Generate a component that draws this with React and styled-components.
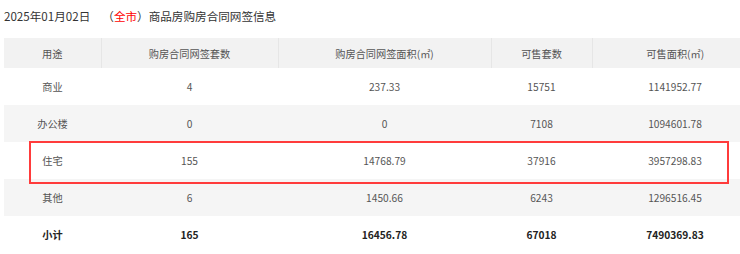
import React from 'react';
import styled, { createGlobalStyle } from 'styled-components';

// #region data
const COLUMNS = [
  { title: '用途', width: 97 },
  { title: '购房合同网签套数', width: 177 },
  { title: '购房合同网签面积(㎡)', width: 213 },
  { title: '可售套数', width: 101 },
  { title: '可售面积(㎡)', width: 166 },
];

const ROWS = [
  ['商业', '4', '237.33', '15751', '1141952.77'],
  ['办公楼', '0', '0', '7108', '1094601.78'],
  ['住宅', '155', '14768.79', '37916', '3957298.83'],
  ['其他', '6', '1450.66', '6243', '1296516.45'],
];

const TOTAL = ['小计', '165', '16456.78', '67018', '7490369.83'];
// #endregion

// #region styled components
const GlobalStyle = createGlobalStyle`
  html, body {
    margin: 0;
    padding: 0;
    overflow: hidden;
    background: #fff;
  }
  body {
    font-family: "Noto Sans CJK SC", "Noto Sans", sans-serif;
  }
`;

const Page = styled.div`
  width: 740px;
  height: 254px;
  padding: 0 0 0 4px;
  box-sizing: border-box;
  overflow: hidden;
`;

const Title = styled.div`
  display: flex;
  align-items: center;
  height: 20px;
  padding-top: 6px;
  margin-bottom: 12px;
  font-size: 11.6px;
  color: #333;
  white-space: nowrap;
`;

const Region = styled.span`
  margin-left: 12px;
`;

const Red = styled.span`
  color: #f00;
`;

const TableWrap = styled.div`
  position: relative;
  width: 754px;
`;

const Table = styled.table`
  width: 754px;
  table-layout: fixed;
  border-collapse: collapse;
  font-size: 10.2px;
  color: #555;
`;

const HeadCell = styled.th`
  height: 30px;
  padding: 0;
  font-weight: normal;
  text-align: center;
  background: #f2f2f2;
  border-left: 1px solid #e6e6e6;
  &:first-child {
    border-left: none;
  }
`;

const Row = styled.tr`
  background: ${p => (p.$striped ? '#f5f5f5' : '#fff')};
`;

const Cell = styled.td`
  height: 37px;
  padding: 0;
  text-align: center;
  font-weight: ${p => (p.$bold ? 'bold' : 'normal')};
  color: ${p => (p.$bold ? '#222' : '#555')};
`;

const Highlight = styled.div`
  position: absolute;
  top: 103px;
  left: 25px;
  width: 700px;
  height: 43px;
  box-sizing: border-box;
  border: 2px solid #ff3b3b;
  pointer-events: none;
`;
// #endregion

export default function App() {
  return (
    <Page>
      <GlobalStyle />
      <Title>
        2025年01月02日
        <Region>
          （<Red>全市</Red>）商品房购房合同网签信息
        </Region>
      </Title>
      <TableWrap>
        <Table>
          <colgroup>
            {COLUMNS.map(col => (
              <col key={col.title} style={{ width: col.width }} />
            ))}
          </colgroup>
          <thead>
            <tr>
              {COLUMNS.map(col => (
                <HeadCell key={col.title}>{col.title}</HeadCell>
              ))}
            </tr>
          </thead>
          <tbody>
            {ROWS.map((row, i) => (
              <Row key={row[0]} $striped={i % 2 === 1}>
                {row.map((value, j) => (
                  <Cell key={j}>{value}</Cell>
                ))}
              </Row>
            ))}
            <Row>
              {TOTAL.map((value, j) => (
                <Cell key={j} $bold>
                  {value}
                </Cell>
              ))}
            </Row>
          </tbody>
        </Table>
        <Highlight />
      </TableWrap>
    </Page>
  );
}
